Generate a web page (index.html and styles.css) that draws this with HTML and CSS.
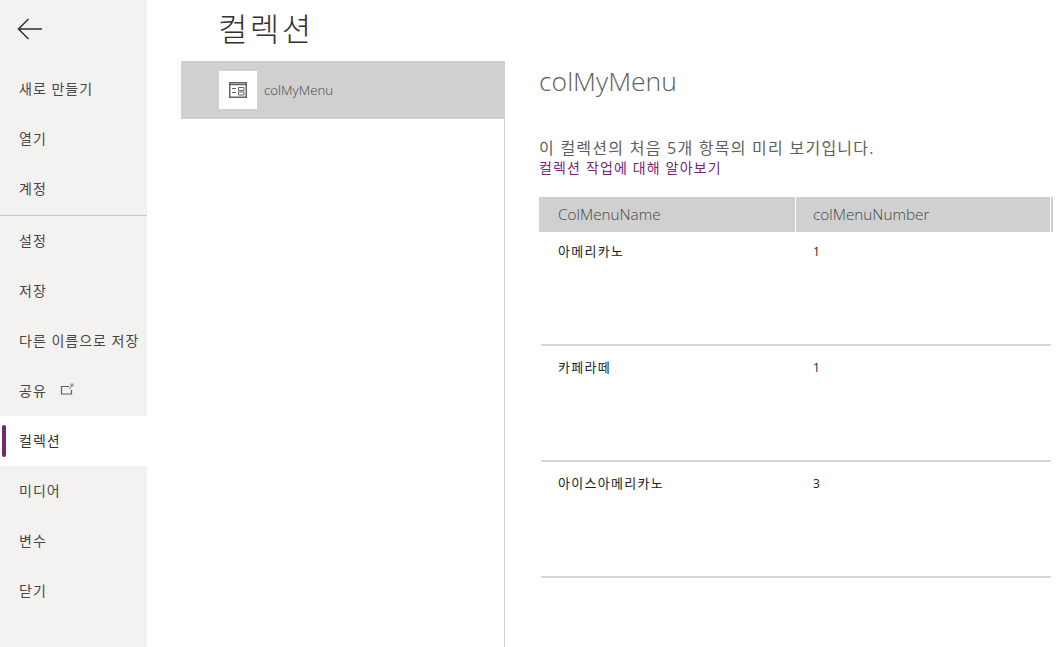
FILE: index.html
```html
<!DOCTYPE html>
<html lang="ko">

<head>
  <meta charset="UTF-8">
  <title>컬렉션</title>
  <link rel="stylesheet" href="styles.css">
</head>

<body>
  <div class="app">
    <div class="side">
      <div class="back">
        <svg width="26" height="22" viewBox="0 0 26 22" fill="none" stroke="#323130" stroke-width="1.5">
          <path d="M1.5 11H25M11.5 1L1.5 11l10 10" />
        </svg>
      </div>
      <ul class="nav">
        <li>새로 만들기</li>
        <li>열기</li>
        <li>계정</li>
      </ul>
      <ul class="nav nav-line">
        <li>설정</li>
        <li>저장</li>
        <li>다른 이름으로 저장</li>
        <li>공유
          <svg class="share" width="14" height="12" viewBox="0 0 14 12" fill="none" stroke="#605e5c">
            <path d="M9 3.5H1.5v7.5h10V7" stroke-width="1.2" />
            <path d="M9 6l4-4" stroke="#a19f9d" stroke-width="1.2" />
            <path d="M10.5 .5h3v3h-3z" fill="#a19f9d" stroke="none" />
          </svg>
        </li>
        <li class="on">컬렉션</li>
        <li>미디어</li>
        <li>변수</li>
        <li>닫기</li>
      </ul>
    </div>

    <div class="main">
      <h1 class="tit">컬렉션</h1>
      <div class="panes">
        <div class="list">
          <div class="list-item">
            <span class="item-icon">
              <svg width="18" height="16" viewBox="0 0 18 16" fill="none" stroke="#666">
                <path d="M.75 .75h16.5v14.5H.75z" stroke-width="1.5" />
                <path d="M1 2.5h16" stroke-width="1.5" />
                <path d="M3 6.5h4M3 10.5h4" stroke-width="1.2" />
                <path d="M9.5 5.5h5.5v3H9.5zM9.5 10h5.5v3H9.5z" stroke-width="1" />
              </svg>
            </span>
            <span class="item-name">colMyMenu</span>
          </div>
        </div>
        <div class="detail">
          <h2 class="detail-tit">colMyMenu</h2>
          <p class="desc">이 컬렉션의 처음 5개 항목의 미리 보기입니다.</p>
          <a class="learn" href="#">컬렉션 작업에 대해 알아보기</a>
          <div class="grid">
            <div class="grid-head">ColMenuName</div>
            <div class="grid-head">colMenuNumber</div>
            <div class="grid-head"></div>
            <div class="grid-row">
              <div class="cell">아메리카노</div>
              <div class="cell cell-num">1</div>
            </div>
            <div class="grid-row">
              <div class="cell">카페라떼</div>
              <div class="cell cell-num">1</div>
            </div>
            <div class="grid-row">
              <div class="cell">아이스아메리카노</div>
              <div class="cell cell-num">3</div>
            </div>
          </div>
        </div>
      </div>
    </div>
  </div>
</body>

</html>
```

FILE: styles.css
```css
html,
body {
  height: 100%;
}

body,
h1,
h2,
p,
ul {
  margin: 0;
  padding: 0;
}

ul {
  list-style: none;
}

body {
  overflow: hidden;
  background-color: #fff;
  color: #323130;
  font-family: "Open Sans", "Noto Sans CJK KR", sans-serif;
}

.app {
  display: flex;
  height: 100%;
}

/* 왼쪽 메뉴 */
.side {
  flex: none;
  width: 147px;
  background-color: #f3f2f1;
}

.back {
  display: flex;
  align-items: center;
  height: 64px;
  padding-left: 17px;
  padding-bottom: 6px;
  box-sizing: border-box;
}

.nav li {
  display: flex;
  align-items: center;
  height: 50px;
  padding-left: 19px;
  padding-bottom: 2px;
  box-sizing: border-box;
  font-size: 14px;
  letter-spacing: 1px;
  color: #484644;
  white-space: nowrap;
}

.nav-line {
  margin-top: 1px;
  border-top: 1px solid #c8c6c4;
}

.share {
  margin-left: 13px;
  margin-top: -3px;
}

.nav .on {
  position: relative;
  background-color: #fff;
  color: #323130;
}

.nav .on::before {
  content: "";
  position: absolute;
  left: 2px;
  top: 9px;
  width: 4px;
  height: 32px;
  border-radius: 2px;
  background-color: #742774;
}

/* 본문 */
.main {
  flex: 1;
  min-width: 0;
  padding-left: 34px;
}

.tit {
  height: 61px;
  padding-left: 37px;
  font-size: 32px;
  font-weight: 300;
  letter-spacing: 2.4px;
  line-height: 58px;
  color: #323130;
}

.panes {
  display: flex;
  height: 586px;
}

.list {
  flex: none;
  width: 323px;
  border-right: 1px solid #d0d0d0;
}

.list-item {
  display: flex;
  align-items: center;
  height: 58px;
  margin-right: -1px;
  padding-left: 38px;
  background-color: #d0d0d0;
}

.item-icon {
  display: flex;
  align-items: center;
  justify-content: center;
  width: 38px;
  height: 38px;
  background-color: #fff;
}

.item-name {
  margin-left: 7px;
  font-size: 13.3px;
  font-weight: 300;
  color: #484644;
}

.detail {
  flex: 1;
  min-width: 0;
  padding-left: 34px;
}

.detail-tit {
  height: 75px;
  font-size: 26.5px;
  font-weight: 300;
  line-height: 41px;
  color: #605e5c;
}

.desc {
  font-size: 16px;
  letter-spacing: 1.25px;
  line-height: 24px;
  color: #605e5c;
}

.learn {
  display: block;
  font-size: 14px;
  letter-spacing: 1.15px;
  line-height: 16px;
  color: #742774;
  text-decoration: none;
}

.grid {
  display: grid;
  grid-template-columns: 256px 254px 2px;
  column-gap: 1px;
  margin-top: 21px;
}

.grid-head {
  height: 35px;
  padding-left: 19px;
  box-sizing: border-box;
  background-color: #d0d0d0;
  font-size: 15.3px;
  font-weight: 300;
  line-height: 35px;
  color: #484644;
}

.grid-head:nth-child(2) {
  padding-left: 17px;
}

.grid-head:nth-child(3) {
  padding: 0;
}

.grid-row {
  display: flex;
  grid-column: 1 / -1;
  height: 116px;
  padding-top: 12px;
  margin-left: 2px;
  margin-right: 2px;
  box-sizing: border-box;
  border-bottom: 2px solid #d6d6d6;
}

.grid-row:nth-child(4) {
  height: 114px;
  padding-top: 10px;
}

.cell {
  font-size: 13px;
  letter-spacing: 1.3px;
  line-height: 18px;
  color: #201f1e;
}

.cell:first-child {
  width: 272px;
  padding-left: 17px;
  box-sizing: border-box;
}

.cell-num {
  padding-top: 1px;
  font-size: 12px;
  letter-spacing: 0;
}
```
